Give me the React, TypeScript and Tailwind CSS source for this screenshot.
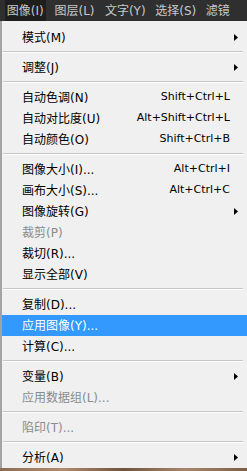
type Item =
  | { kind: 'sep' }
  | {
      kind: 'item';
      label: string;
      shortcut?: string;
      sub?: boolean;
      disabled?: boolean;
      active?: boolean;
    };

const items: Item[] = [
  { kind: 'item', label: '模式(M)', sub: true },
  { kind: 'sep' },
  { kind: 'item', label: '调整(J)', sub: true },
  { kind: 'sep' },
  { kind: 'item', label: '自动色调(N)', shortcut: 'Shift+Ctrl+L' },
  { kind: 'item', label: '自动对比度(U)', shortcut: 'Alt+Shift+Ctrl+L' },
  { kind: 'item', label: '自动颜色(O)', shortcut: 'Shift+Ctrl+B' },
  { kind: 'sep' },
  { kind: 'item', label: '图像大小(I)...', shortcut: 'Alt+Ctrl+I' },
  { kind: 'item', label: '画布大小(S)...', shortcut: 'Alt+Ctrl+C' },
  { kind: 'item', label: '图像旋转(G)', sub: true },
  { kind: 'item', label: '裁剪(P)', disabled: true },
  { kind: 'item', label: '裁切(R)...' },
  { kind: 'item', label: '显示全部(V)' },
  { kind: 'sep' },
  { kind: 'item', label: '复制(D)...' },
  { kind: 'item', label: '应用图像(Y)...', active: true },
  { kind: 'item', label: '计算(C)...' },
  { kind: 'sep' },
  { kind: 'item', label: '变量(B)', sub: true },
  { kind: 'item', label: '应用数据组(L)...', disabled: true },
  { kind: 'sep' },
  { kind: 'item', label: '陷印(T)...', disabled: true },
  { kind: 'sep' },
  { kind: 'item', label: '分析(A)', sub: true },
];

const topMenus = ['图像(I)', '图层(L)', '文字(Y)', '选择(S)', '滤镜'];

function Arrow() {
  return (
    <svg width="4" height="7" viewBox="0 0 4 7" className="absolute right-[9px] top-[7px]">
      <path d="M0 0L4 3.5L0 7Z" fill="#000" />
    </svg>
  );
}

export default function App() {
  return (
    <div className="flex h-[471px] w-[247px] flex-col overflow-hidden bg-[#f0f0f0] font-['DejaVu_Sans','Noto_Sans_CJK_SC',sans-serif] text-[12px]">
      {/* Menu bar */}
      <div className="flex h-[21px] shrink-0 items-stretch bg-[#2f2f2f] pl-[5px] text-[#c9c9c9]">
        {topMenus.map((m, i) => (
          <div
            key={m}
            className={
              i === 0
                ? 'flex w-[46px] items-center justify-center bg-[#1e1e1e]'
                : 'flex w-[56px] items-center pl-[9px] whitespace-nowrap'
            }
          >
            {m}
          </div>
        ))}
      </div>

      {/* Dropdown */}
      <div className="flex flex-1 flex-col border-l-2 border-[#a3a3a3] pt-[6px]">
        {items.map((it, i) =>
          it.kind === 'sep' ? (
            <div key={i} className="h-[9px] pl-px pr-[4px] pt-[3px]">
              <div className="h-px bg-[#c5c5c5]" />
              <div className="h-px bg-white" />
            </div>
          ) : (
            <div
              key={i}
              className={`relative flex h-[21px] items-center pl-[20px] pr-[17px] whitespace-nowrap ${
                it.active ? 'bg-[#3399ff] text-white' : it.disabled ? 'text-[#8b8b8b]' : 'text-black'
              }`}
            >
              <span className="flex-1">{it.label}</span>
              {it.shortcut && <span className="text-[11px]">{it.shortcut}</span>}
              {it.sub && <Arrow />}
            </div>
          ),
        )}
      </div>

      {/* Canvas peeking below */}
      <div className="h-[3px] shrink-0 bg-[linear-gradient(90deg,#8a6c55,#b08c70,#6e5440,#a6876c,#7a5e48)]" />
    </div>
  );
}
